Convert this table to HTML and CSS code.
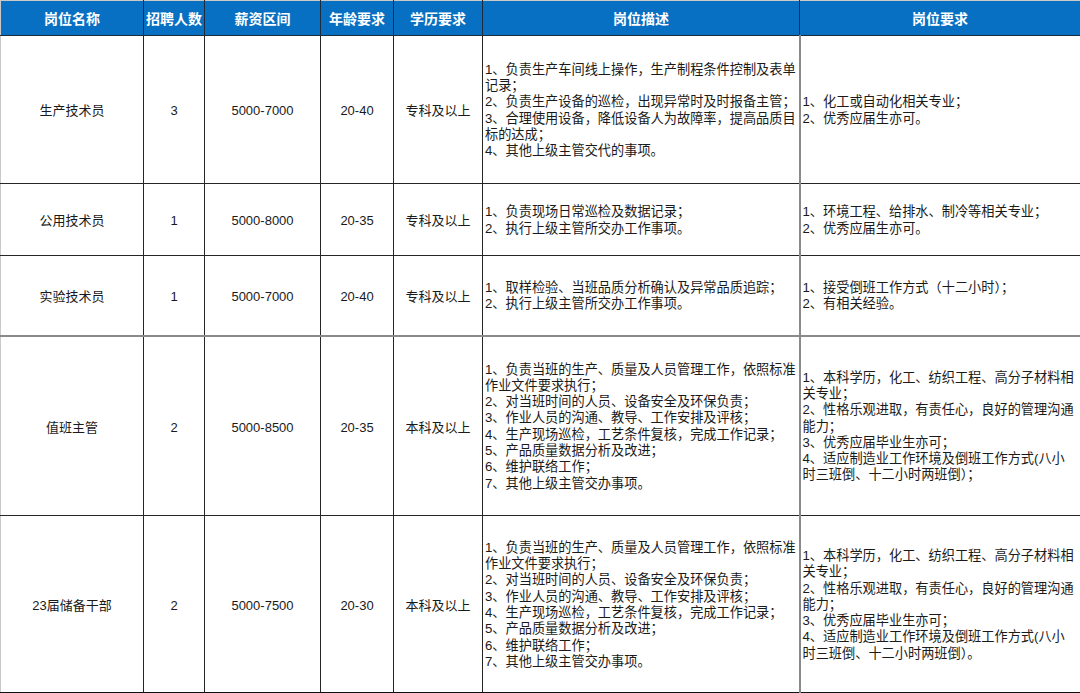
FILE: index.html
```html
<!DOCTYPE html>
<html lang="zh-CN">
<head>
<meta charset="utf-8">
<title>招聘岗位</title>
<link rel="stylesheet" href="styles.css">
</head>
<body>
<table class="jobs">
  <colgroup>
    <col class="c-name"><col class="c-num"><col class="c-pay"><col class="c-age"><col class="c-edu"><col class="c-desc"><col class="c-req">
  </colgroup>
  <thead>
    <tr class="head">
      <th>岗位名称</th><th>招聘人数</th><th>薪资区间</th><th>年龄要求</th><th>学历要求</th><th>岗位描述</th><th class="last">岗位要求</th>
    </tr>
  </thead>
  <tbody>
    <tr class="r1">
      <td>生产技术员</td><td>3</td><td>5000-7000</td><td>20-40</td><td>专科及以上</td>
      <td class="txt">1、负责生产车间线上操作，生产制程条件控制及表单<br>记录；<br>2、负责生产设备的巡检，出现异常时及时报备主管；<br>3、合理使用设备，降低设备人为故障率，提高品质目<br>标的达成；<br>4、其他上级主管交代的事项。</td>
      <td class="txt req">1、化工或自动化相关专业；<br>2、优秀应届生亦可。</td>
    </tr>
    <tr class="r2">
      <td>公用技术员</td><td>1</td><td>5000-8000</td><td>20-35</td><td>专科及以上</td>
      <td class="txt">1、负责现场日常巡检及数据记录；<br>2、执行上级主管所交办工作事项。</td>
      <td class="txt req">1、环境工程、给排水、制冷等相关专业；<br>2、优秀应届生亦可。</td>
    </tr>
    <tr class="r3">
      <td>实验技术员</td><td>1</td><td>5000-7000</td><td>20-40</td><td>专科及以上</td>
      <td class="txt">1、取样检验、当班品质分析确认及异常品质追踪；<br>2、执行上级主管所交办工作事项。</td>
      <td class="txt req">1、接受倒班工作方式（十二小时）；<br>2、有相关经验。</td>
    </tr>
    <tr class="r4">
      <td>值班主管</td><td>2</td><td>5000-8500</td><td>20-35</td><td>本科及以上</td>
      <td class="txt">1、负责当班的生产、质量及人员管理工作，依照标准<br>作业文件要求执行；<br>2、对当班时间的人员、设备安全及环保负责；<br>3、作业人员的沟通、教导、工作安排及评核；<br>4、生产现场巡检，工艺条件复核，完成工作记录；<br>5、产品质量数据分析及改进；<br>6、维护联络工作；<br>7、其他上级主管交办事项。</td>
      <td class="txt req">1、本科学历，化工、纺织工程、高分子材料相<br>关专业；<br>2、性格乐观进取，有责任心，良好的管理沟通<br>能力；<br>3、优秀应届毕业生亦可；<br>4、适应制造业工作环境及倒班工作方式(八小<br>时三班倒、十二小时两班倒）；</td>
    </tr>
    <tr class="r5">
      <td>23届储备干部</td><td>2</td><td>5000-7500</td><td>20-30</td><td>本科及以上</td>
      <td class="txt">1、负责当班的生产、质量及人员管理工作，依照标准<br>作业文件要求执行；<br>2、对当班时间的人员、设备安全及环保负责；<br>3、作业人员的沟通、教导、工作安排及评核；<br>4、生产现场巡检，工艺条件复核，完成工作记录；<br>5、产品质量数据分析及改进；<br>6、维护联络工作；<br>7、其他上级主管交办事项。</td>
      <td class="txt req">1、本科学历，化工、纺织工程、高分子材料相<br>关专业；<br>2、性格乐观进取，有责任心，良好的管理沟通<br>能力；<br>3、优秀应届毕业生亦可；<br>4、适应制造业工作环境及倒班工作方式(八小<br>时三班倒、十二小时两班倒）。</td>
    </tr>
  </tbody>
</table>
</body>
</html>
```
FILE: styles.css
```css
html, body {
  margin: 0;
  padding: 0;
  background: #ffffff;
}

.jobs {
  width: 1080px;
  border-collapse: collapse;
  table-layout: fixed;
  font-family: "Liberation Sans", "Noto Sans CJK SC", sans-serif;
  font-size: 13px;
  color: #1a1a1a;
}

.c-name { width: 143px; }
.c-num { width: 61px; }
.c-pay { width: 116px; }
.c-age { width: 73px; }
.c-edu { width: 89px; }
.c-desc { width: 317px; }
.c-req { width: 281px; }

.head { height: 35px; }

.head th {
  background: #0870c2;
  color: #ffffff;
  font-weight: bold;
  font-size: 14px;
  line-height: 16px;
  padding: 2px 0 0 0;
  text-align: center;
  vertical-align: middle;
  border-top: 1px solid #c9c9c9;
  border-left: 1px solid #1d2c3c;
  border-right: 1px solid #1d2c3c;
  border-bottom: 1px solid #1d2c3c;
  white-space: nowrap;
  overflow: hidden;
}

.head th:first-child {
  border-left: 1px solid #c9c9c9;
}

.head th.last {
  border-right: 1px solid #111;
}

td {
  border: 1px solid #262626;
  text-align: center;
  vertical-align: middle;
  padding: 4px 0 0 0;
  line-height: 16.3px;
  white-space: nowrap;
  overflow: hidden;
}

td:first-child {
  border-left: 1px solid #c9c9c9;
}

td.txt {
  text-align: left;
  padding: 2px 0 0 2px;
  font-size: 13.2px;
}

td.req {
  border-left: 2px solid #8a8a8a;
  border-right: 1px solid #111;
}

.r1 { height: 148px; }
.r2 { height: 72px; }
.r3 { height: 80px; }
.r3 td { border-bottom: 2px solid #8a8a8a; }
.r4 { height: 180px; }
.r5 { height: 177px; }
.r5 td { border-bottom: 1px solid #111; }
```
